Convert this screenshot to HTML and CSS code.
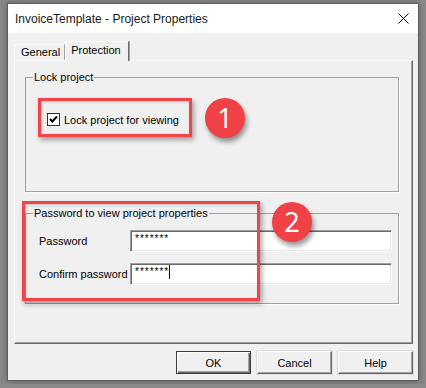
FILE: index.html
```html
<!DOCTYPE html>
<html lang="en">
  <head>
    <meta charset="UTF-8" />
    <meta name="viewport" content="width=device-width, initial-scale=1.0" />
    <title>Project Properties</title>
    <link rel="stylesheet" href="styles.css">
  </head>
  <body>
    <!-- Dialog window -->
    <div class="window">
      <div class="titlebar">
        <span class="title">InvoiceTemplate - Project Properties</span>
        <span class="close">
          <svg width="11" height="11" viewBox="0 0 11 11">
            <path d="M0.5 0.5 L10.5 10.5 M10.5 0.5 L0.5 10.5" stroke="#000" stroke-width="1" fill="none" />
          </svg>
        </span>
      </div>

      <div class="content">
        <div class="tabs">
          <div class="tab">General</div>
          <div class="tab active">Protection</div>
        </div>

        <div class="panel">
          <fieldset class="group">
            <legend>Lock project</legend>
            <div class="group-body lock-body">
              <label class="check">
                <span class="box">
                  <svg width="11" height="11" viewBox="0 0 11 11">
                    <path d="M2 5 L4.3 7.5 L9 2.5" stroke="#000" stroke-width="2" fill="none" />
                  </svg>
                </span>
                Lock project for viewing
              </label>
            </div>
          </fieldset>

          <fieldset class="group group-pass">
            <legend>Password to view project properties</legend>
            <div class="group-body pass-body">
              <div class="field">
                <span class="field-label">Password</span>
                <span class="textbox">*******</span>
              </div>
              <div class="field">
                <span class="field-label">Confirm password</span>
                <span class="textbox">*******<span class="caret"></span></span>
              </div>
            </div>
          </fieldset>
        </div>

        <div class="buttons">
          <button class="btn default">OK</button>
          <button class="btn">Cancel</button>
          <button class="btn">Help</button>
        </div>
      </div>

      <!-- Annotations -->
      <div class="mark mark-lock"></div>
      <div class="badge badge-1">1</div>
      <div class="mark mark-pass"></div>
      <div class="badge badge-2">2</div>
    </div>
  </body>
</html>
```

FILE: styles.css
```css
html {
  background: #898989;
}
body {
  margin: 0;
  padding: 3px 7px;
  font-family: "Liberation Sans", Arial, sans-serif;
  font-size: 11px;
  color: #000;
}
.window {
  position: relative;
  width: 412px;
  height: 378px;
  box-sizing: border-box;
  border: 1px solid #5c5c5c;
  background: #f0f0f0;
  box-shadow: 0 0 6px rgba(0, 0, 0, 0.35);
}
.titlebar {
  height: 29px;
  background: #fff;
  display: flex;
  align-items: center;
  justify-content: space-between;
  padding: 0 9px 0 7px;
}
.title {
  font-size: 12px;
  color: #1a1a1a;
}
.close {
  display: flex;
}
.content {
  padding: 9px 5px 0 6px;
}
.tabs {
  display: flex;
  align-items: flex-end;
  height: 18px;
}
.tab {
  height: 16px;
  line-height: 15px;
  padding: 0 4px 0 6px;
  border: 1px solid;
  border-color: #fff #a0a0a0 transparent #fff;
  border-bottom: none;
  box-sizing: border-box;
}
.tab.active {
  position: relative;
  z-index: 1;
  height: 20px;
  line-height: 17px;
  margin-bottom: -1px;
  padding: 0 7px 0 5px;
  background: #f0f0f0;
  border-color: #fff #696969 transparent #fff;
  box-shadow: 1px 0 0 #a0a0a0;
}
.panel {
  height: 284px;
  box-sizing: border-box;
  border: 1px solid;
  border-color: #fff #696969 #696969 #fff;
  box-shadow: inset -1px -1px 0 #a0a0a0;
  padding: 9px 13px 0 10px;
}
.group {
  margin: 0;
  padding: 0;
  border: 1px solid #a0a0a0;
  box-shadow: 1px 1px 0 #fff;
}
.group legend {
  margin-left: 7px;
  padding: 0 1px;
  line-height: 14px;
}
.group-pass {
  margin-top: 14px;
}
.lock-body {
  height: 107px;
  box-sizing: border-box;
  padding: 29px 0 0 21px;
}
.check {
  display: flex;
  align-items: center;
  gap: 4px;
  height: 13px;
}
.box {
  width: 13px;
  height: 13px;
  box-sizing: border-box;
  border: 1px solid #333;
  background: #fff;
  display: flex;
  align-items: center;
  justify-content: center;
}
.pass-body {
  height: 83px;
  box-sizing: border-box;
  padding: 10px 6px 0 13px;
  display: flex;
  flex-direction: column;
  gap: 11px;
}
.field {
  display: flex;
  align-items: center;
}
.field-label {
  width: 91px;
}
.textbox {
  width: 262px;
  height: 22px;
  box-sizing: border-box;
  background: #fff;
  border: 1px solid;
  border-color: #a0a0a0 #fff #fff #a0a0a0;
  box-shadow: inset 1px 1px 0 #696969, inset -1px -1px 0 #e3e3e3;
  padding: 2px 0 0 4px;
  font-size: 10px;
  letter-spacing: 1px;
  display: flex;
  align-items: flex-start;
}
.caret {
  width: 1px;
  height: 14px;
  margin-top: -1px;
  background: #000;
}
.buttons {
  display: flex;
  justify-content: flex-end;
  gap: 6px;
  margin-top: 7px;
}
.btn {
  width: 75px;
  height: 23px;
  box-sizing: border-box;
  font-family: "Liberation Sans", Arial, sans-serif;
  font-size: 11px;
  color: #000;
  background: #f0f0f0;
  border: 1px solid;
  border-color: #fff #696969 #696969 #fff;
  box-shadow: inset -1px -1px 0 #a0a0a0, 0 0 0 1px #dcdcdc;
  padding: 0;
}
.btn.default {
  border: 1px solid #3c3c3c;
  box-shadow: inset 1px 1px 0 #fff, inset -1px -1px 0 #696969, inset -2px -2px 0 #a0a0a0;
}

/* annotations */
.mark {
  position: absolute;
  box-sizing: border-box;
  border: 3px solid #ef4449;
  box-shadow: 2px 3px 5px rgba(0, 0, 0, 0.35), inset 1px 1px 3px rgba(0, 0, 0, 0.2);
}
.mark-lock {
  left: 30px;
  top: 94px;
  width: 154px;
  height: 39px;
}
.mark-pass {
  left: 14px;
  top: 197px;
  width: 238px;
  height: 100px;
}
.badge {
  position: absolute;
  width: 40px;
  height: 40px;
  border-radius: 50%;
  background: #ef4146;
  color: #fff;
  font-family: "Noto Sans", sans-serif;
  font-size: 27px;
  line-height: 40px;
  text-align: center;
  box-shadow: 2px 4px 5px rgba(0, 0, 0, 0.4);
}
.badge-1 {
  left: 197px;
  top: 94px;
}
.badge-2 {
  left: 264px;
  top: 198px;
}
```
